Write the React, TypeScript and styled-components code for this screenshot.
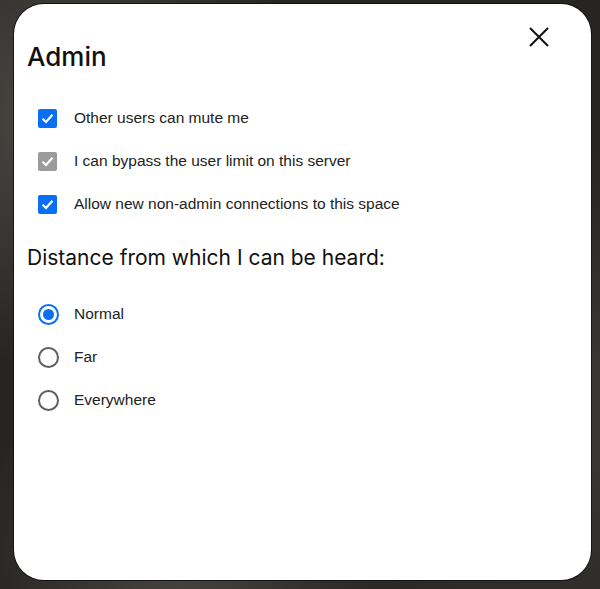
import styled, { createGlobalStyle } from "styled-components";

const Global = createGlobalStyle`
  html, body {
    margin: 0;
    height: 100%;
  }
  body {
    background:
      radial-gradient(circle at 10% 20%, #4a4944 0%, transparent 35%),
      radial-gradient(circle at 90% 70%, #3d3c38 0%, transparent 40%),
      radial-gradient(circle at 30% 95%, #45443f 0%, transparent 30%),
      #262522;
    overflow: hidden;
  }
`;

const Page = styled.div`
  padding: 4px 0 0 14px;
`;

const Modal = styled.div`
  position: relative;
  box-sizing: border-box;
  width: 577px;
  height: 576px;
  background: #fff;
  border-radius: 30px;
  box-shadow: 0 0 0 1px #141414;
  padding: 37px 13px 0 13px;
`;

const CloseButton = styled.button`
  position: absolute;
  top: 18px;
  right: 37px;
  width: 30px;
  height: 30px;
  padding: 0;
  border: none;
  background: none;
  display: flex;
  align-items: center;
  justify-content: center;
  cursor: pointer;
`;

const Title = styled.h2`
  margin: 0;
  font-family: Inter, "Noto Sans", sans-serif;
  font-weight: 500;
  font-size: 26px;
  line-height: 32px;
  color: #111;
`;

const Heading = styled.h3`
  margin: 0;
  font-family: Inter, "Noto Sans", sans-serif;
  font-weight: 400;
  font-size: 21px;
  line-height: 26px;
  color: #111;
`;

const List = styled.div<{ $top: number }>`
  display: flex;
  flex-direction: column;
  gap: 19px;
  padding-left: 11px;
  margin-top: ${(p) => p.$top}px;
`;

const Row = styled.label<{ $gap: number }>`
  display: flex;
  align-items: center;
  gap: ${(p) => p.$gap}px;
  height: 24px;
  font-family: "Liberation Sans", Arial, sans-serif;
  font-size: 15.5px;
  color: #222;
`;

const Box = styled.span<{ $disabled?: boolean }>`
  width: 19px;
  height: 19px;
  flex: none;
  border-radius: 2px;
  background: ${(p) => (p.$disabled ? "#9b9b9b" : "#0b6ff5")};
  display: flex;
  align-items: center;
  justify-content: center;
`;

const Radio = styled.span<{ $on?: boolean }>`
  box-sizing: border-box;
  width: 21px;
  height: 21px;
  flex: none;
  border-radius: 50%;
  border: 2px solid ${(p) => (p.$on ? "#0b6ff5" : "#5f5f5f")};
  display: flex;
  align-items: center;
  justify-content: center;
  &::after {
    content: "";
    display: ${(p) => (p.$on ? "block" : "none")};
    width: 11px;
    height: 11px;
    border-radius: 50%;
    background: #0b6ff5;
  }
`;

const Check = () => (
  <svg width="15" height="15" viewBox="0 0 15 15">
    <path d="M2.5 7.8 L6 11 L12.5 3.8" fill="none" stroke="#fff" strokeWidth="2.2" />
  </svg>
);

const checks = [
  { label: "Other users can mute me", disabled: false },
  { label: "I can bypass the user limit on this server", disabled: true },
  { label: "Allow new non-admin connections to this space", disabled: false },
];

const distances = ["Normal", "Far", "Everywhere"];

export default function App() {
  return (
    <Page>
      <Global />
      <Modal>
        <CloseButton aria-label="Close">
          <svg width="20" height="20" viewBox="0 0 20 20">
            <path d="M1 1 L19 19 M19 1 L1 19" stroke="#111" strokeWidth="2" />
          </svg>
        </CloseButton>
        <Title>Admin</Title>
        <List $top={33}>
          {checks.map((c) => (
            <Row key={c.label} $gap={17}>
              <Box $disabled={c.disabled}>
                <Check />
              </Box>
              {c.label}
            </Row>
          ))}
        </List>
        <Heading style={{ marginTop: 29 }}>Distance from which I can be heard:</Heading>
        <List $top={31}>
          {distances.map((d, i) => (
            <Row key={d} $gap={15}>
              <Radio $on={i === 0} />
              {d}
            </Row>
          ))}
        </List>
      </Modal>
    </Page>
  );
}
